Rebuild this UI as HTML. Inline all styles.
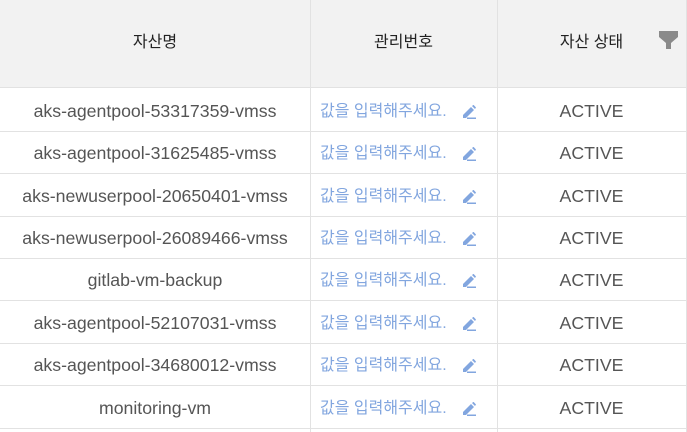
<!DOCTYPE html>
<html><head><meta charset="utf-8"><style>
*{margin:0;padding:0;box-sizing:border-box}
body{width:687px;height:432px;overflow:hidden;background:#fff;font-family:"Liberation Sans","Noto Sans CJK KR",sans-serif;position:relative}
.hdr{position:absolute;left:0;top:0;width:687px;height:88px;background:#f2f2f2;border-bottom:1px solid #e2e2e2}
.vl{position:absolute;top:0;width:1px;height:432px;background:#e2e2e2}
.hl{position:absolute;left:0;width:687px;height:1px;background:#e2e2e2}
.t{position:absolute;text-align:center;font-size:17.7px;line-height:20px;color:#555}
.h{color:#222;font-size:16px;top:33px}
.b{color:#82a6df;text-align:left;font-size:16px}
</style></head><body>
<div class="hdr"></div>
<div class="t h" style="left:0;width:310px">자산명</div>
<div class="t h" style="left:310px;width:187px">관리번호</div>
<div class="t h" style="left:497px;width:189px">자산 상태</div>
<svg style="position:absolute;left:659px;top:31px" width="19" height="19" viewBox="0 0 19 19"><path d="M0 0H19V6L12 12V18H7V12L0 6Z" fill="#8a8a8a"/></svg>
<div class="vl" style="left:310px"></div>
<div class="vl" style="left:497px"></div>
<div class="vl" style="left:686px"></div>
<div id="rows"></div>
<script>
var n=["aks-agentpool-53317359-vmss","aks-agentpool-31625485-vmss","aks-newuserpool-20650401-vmss","aks-newuserpool-26089466-vmss","gitlab-vm-backup","aks-agentpool-52107031-vmss","aks-agentpool-34680012-vmss","monitoring-vm"];
var h="";var ys=[88,131,173,216,258,300,343,385,428];
for(var i=0;i<8;i++){var y=ys[i],c=(ys[i]+ys[i+1])/2-9;
h+='<div class="t" style="left:0;width:310px;top:'+c+'px">'+n[i]+'</div>';
h+='<div class="t b" style="left:320px;top:'+(c+1)+'px">값을 입력해주세요.</div>';
h+='<svg style="position:absolute;left:462px;top:'+(c+4)+'px" width="14" height="14" viewBox="0 0 14 14"><path d="M1 10L9 2L12 5L4 13H1Z M10 1L11.5 -0.2L14 2.5L13 4Z" fill="#82a6df"/><rect x="5" y="12.5" width="9" height="1.5" fill="#82a6df"/></svg>';
h+='<div class="t" style="left:497px;width:189px;top:'+c+'px">ACTIVE</div>';
h+='<div class="hl" style="top:'+ys[i+1]+'px"></div>';}
document.getElementById("rows").innerHTML=h;
</script>
</body></html>
